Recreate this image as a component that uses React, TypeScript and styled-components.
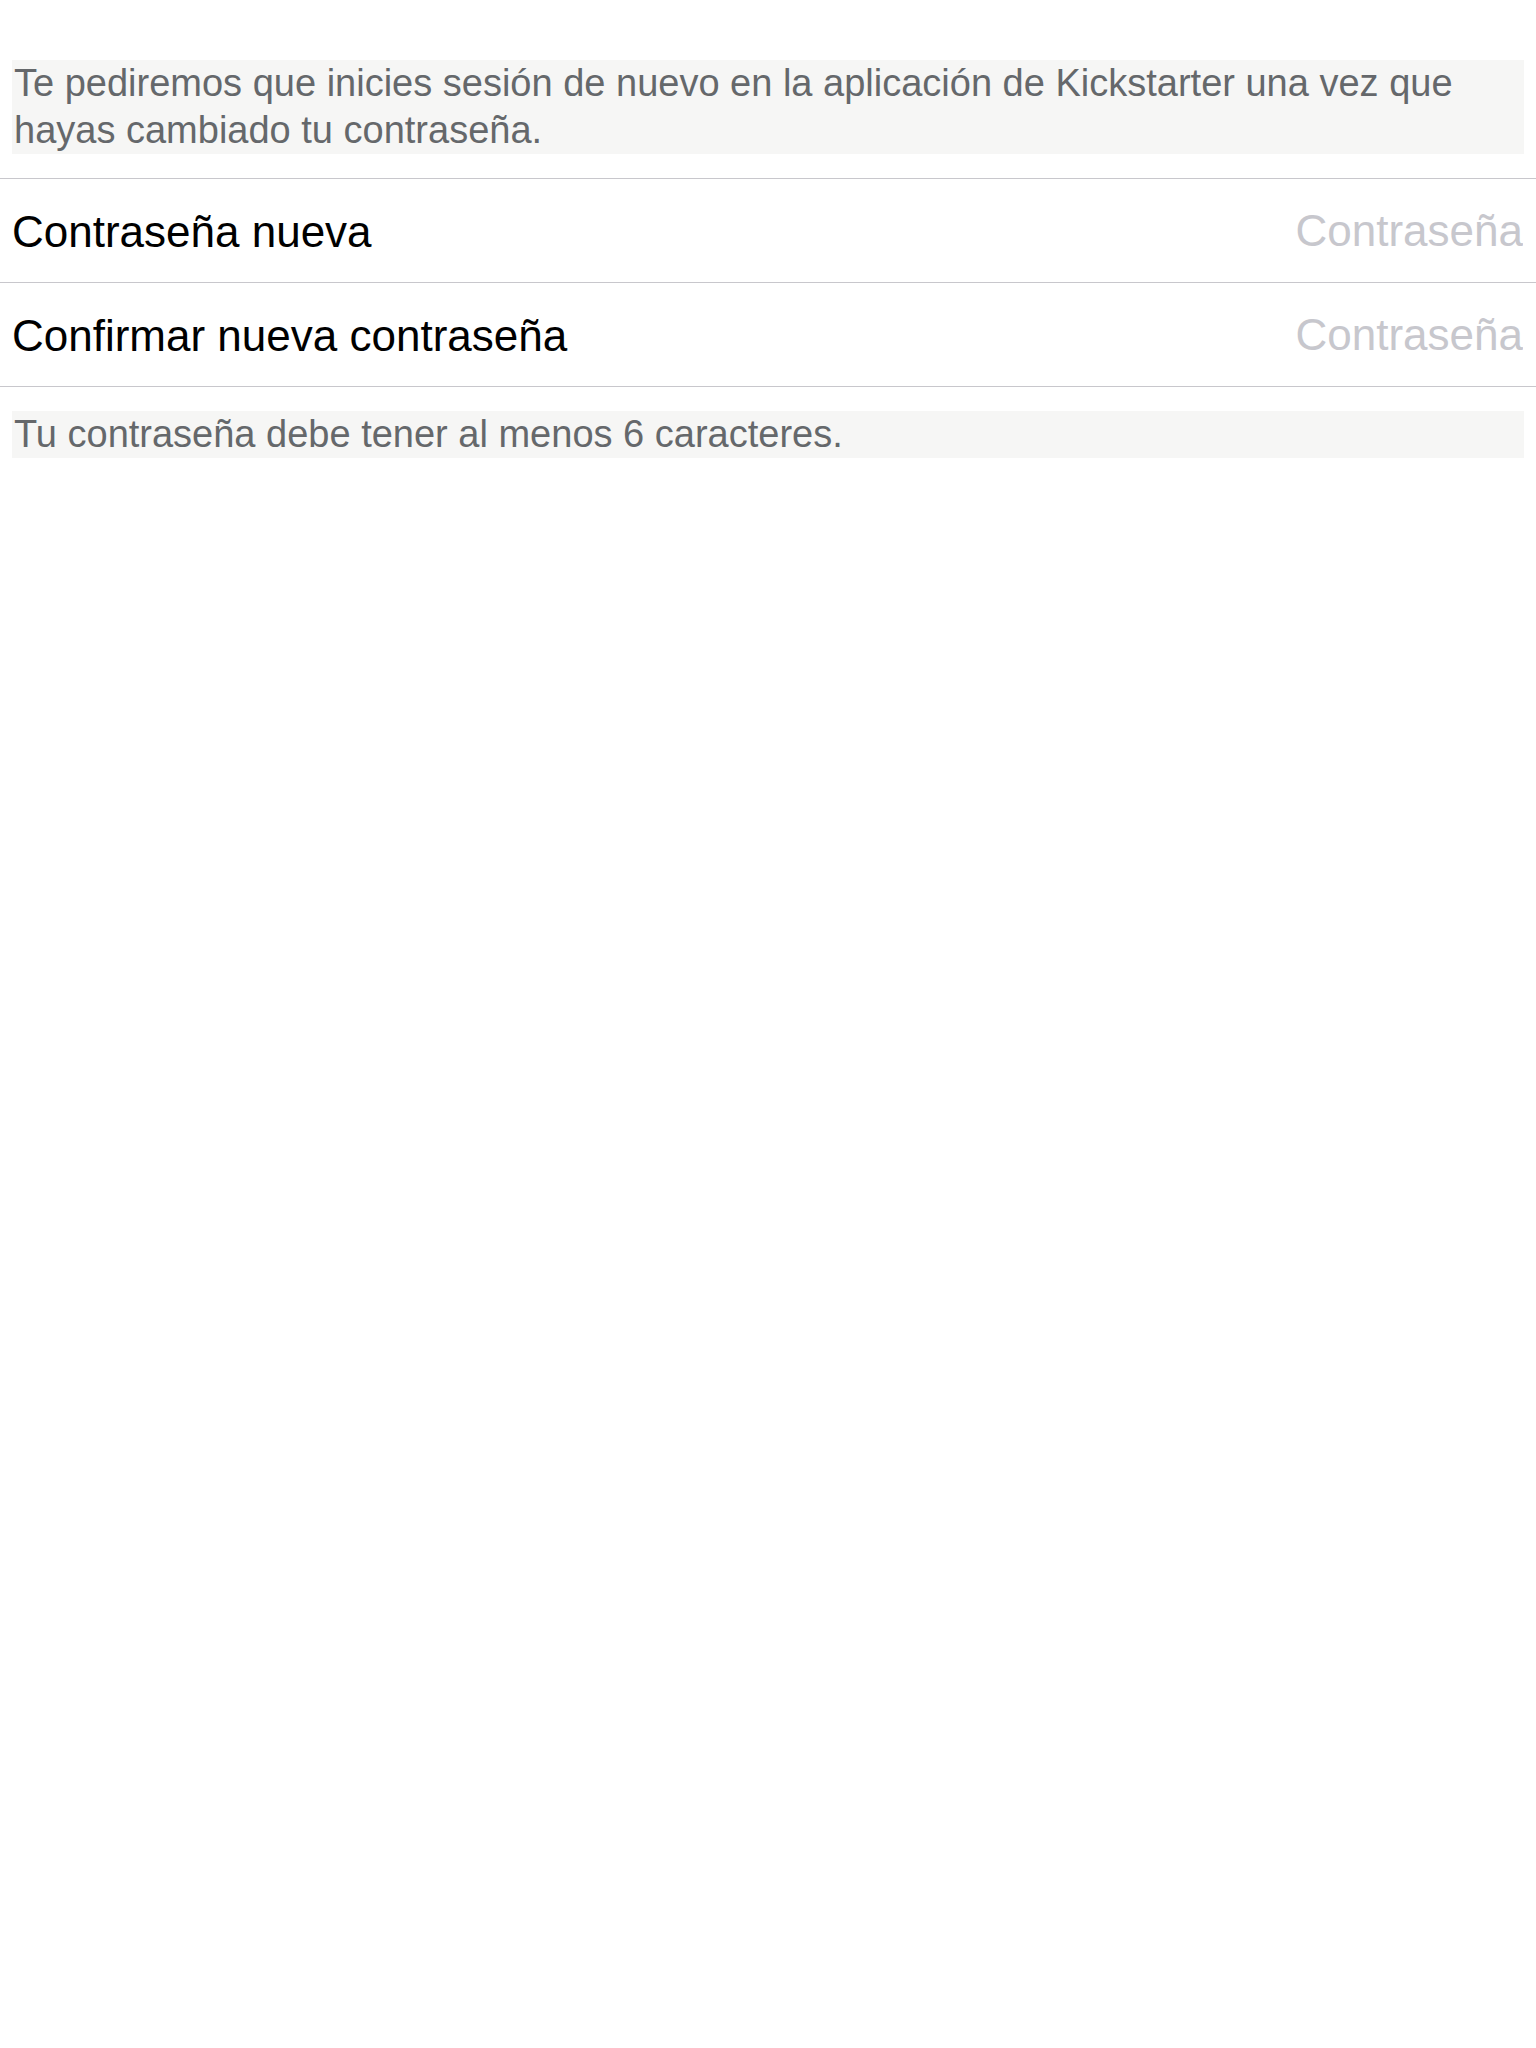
import React from "react";
import styled, { createGlobalStyle } from "styled-components";

const Global = createGlobalStyle`
  html, body {
    margin: 0;
    padding: 0;
    background: #ffffff;
  }
  body {
    font-family: "Liberation Sans", Arial, sans-serif;
  }
`;

const Page = styled.div`
  display: flex;
  flex-direction: column;
  padding-top: 60px;
  min-height: 2048px;
  box-sizing: border-box;
  background: #ffffff;
`;

const Note = styled.p<{ $top?: number }>`
  margin: ${(p) => p.$top ?? 0}px 12px 0;
  padding: 0 2px;
  background: #f6f6f5;
  color: #65686b;
  font-size: 38px;
  line-height: 47px;
`;

const Group = styled.div`
  margin-top: 24px;
  display: flex;
  flex-direction: column;
  border-top: 1px solid #c8c7cc;
`;

const Row = styled.label`
  display: flex;
  align-items: center;
  justify-content: space-between;
  height: 103px;
  padding: 0 13px 0 12px;
  border-bottom: 1px solid #c8c7cc;
`;

const Label = styled.span`
  color: #000000;
  font-size: 44px;
  white-space: nowrap;
  padding-top: 2px;
`;

const Field = styled.input`
  flex: 1;
  min-width: 0;
  border: none;
  outline: none;
  background: transparent;
  text-align: right;
  font-family: "Liberation Sans", Arial, sans-serif;
  font-size: 44px;
  color: #000000;
  padding: 0;
  &::placeholder {
    color: #c7c7cd;
    opacity: 1;
  }
`;

export default function App() {
  return (
    <>
      <Global />
      <Page>
        <Note>
          Te pediremos que inicies sesión de nuevo en la aplicación de Kickstarter una vez que
          hayas cambiado tu contraseña.
        </Note>
        <Group>
          <Row>
            <Label>Contraseña nueva</Label>
            <Field type="password" placeholder="Contraseña" />
          </Row>
          <Row>
            <Label>Confirmar nueva contraseña</Label>
            <Field type="password" placeholder="Contraseña" />
          </Row>
        </Group>
        <Note $top={24}>Tu contraseña debe tener al menos 6 caracteres.</Note>
      </Page>
    </>
  );
}
